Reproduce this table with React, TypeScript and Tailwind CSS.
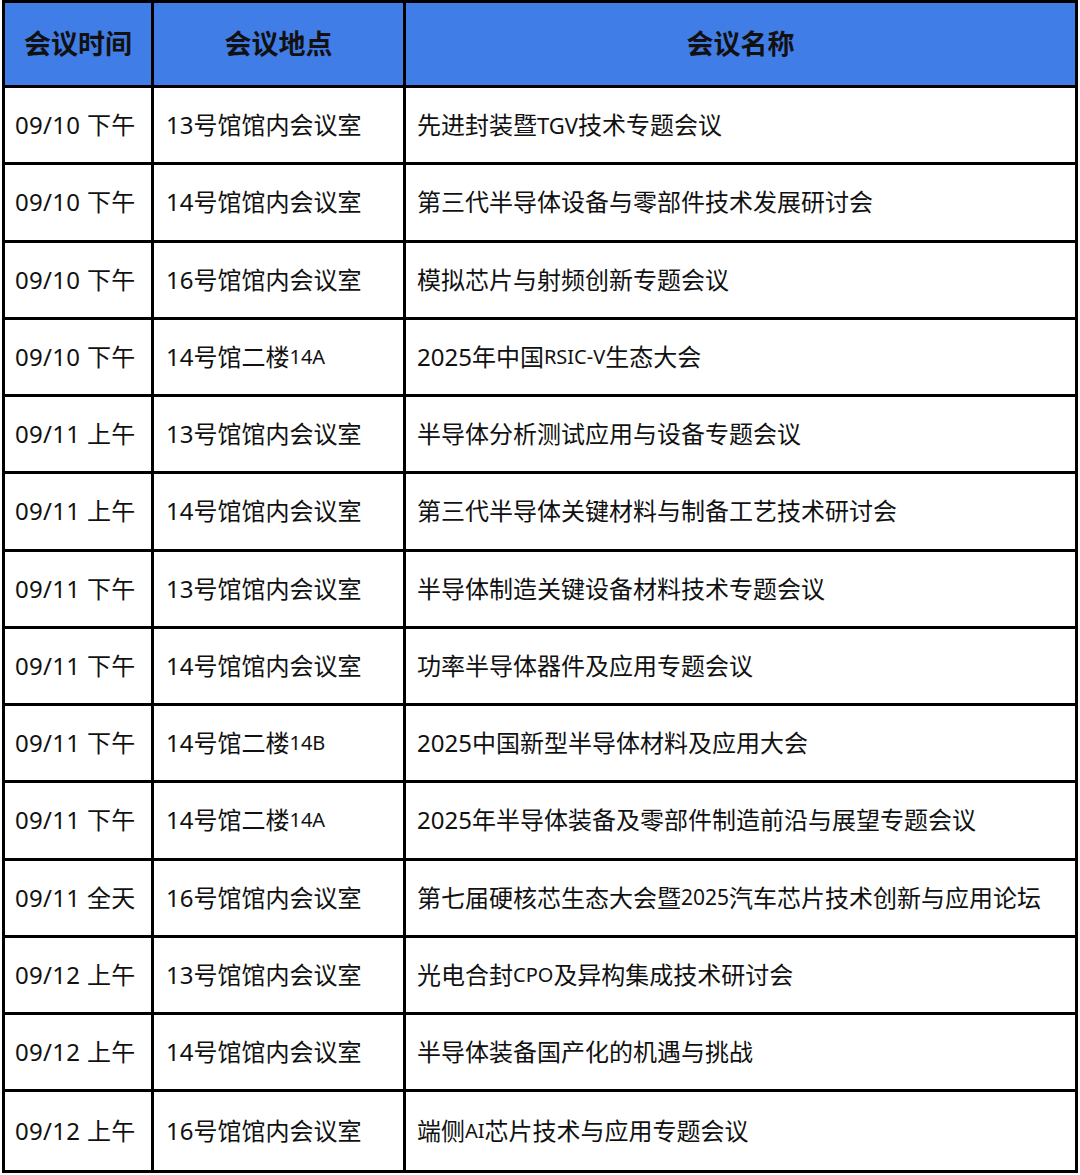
import React from "react"

type Row = { time: string; place: React.ReactNode; name: React.ReactNode }

const S = ({ children }: { children: React.ReactNode }) => (
  <span className="text-[20px]">{children}</span>
)

const rows: Row[] = [
  { time: "09/10 下午", place: "13号馆馆内会议室", name: <>先进封装暨<span className="text-[22px]">TGV</span>技术专题会议</> },
  { time: "09/10 下午", place: "14号馆馆内会议室", name: "第三代半导体设备与零部件技术发展研讨会" },
  { time: "09/10 下午", place: "16号馆馆内会议室", name: "模拟芯片与射频创新专题会议" },
  { time: "09/10 下午", place: <>14号馆二楼<S>14A</S></>, name: <>2025年中国<S>RSIC-V</S>生态大会</> },
  { time: "09/11 上午", place: "13号馆馆内会议室", name: "半导体分析测试应用与设备专题会议" },
  { time: "09/11 上午", place: "14号馆馆内会议室", name: "第三代半导体关键材料与制备工艺技术研讨会" },
  { time: "09/11 下午", place: "13号馆馆内会议室", name: "半导体制造关键设备材料技术专题会议" },
  { time: "09/11 下午", place: "14号馆馆内会议室", name: "功率半导体器件及应用专题会议" },
  { time: "09/11 下午", place: <>14号馆二楼<S>14B</S></>, name: "2025中国新型半导体材料及应用大会" },
  { time: "09/11 下午", place: <>14号馆二楼<S>14A</S></>, name: "2025年半导体装备及零部件制造前沿与展望专题会议" },
  { time: "09/11 全天", place: "16号馆馆内会议室", name: <>第七届硬核芯生态大会暨<span className="text-[21px]">2025</span>汽车芯片技术创新与应用论坛</> },
  { time: "09/12 上午", place: "13号馆馆内会议室", name: <>光电合封<S>CPO</S>及异构集成技术研讨会</> },
  { time: "09/12 上午", place: "14号馆馆内会议室", name: "半导体装备国产化的机遇与挑战" },
  { time: "09/12 上午", place: "16号馆馆内会议室", name: <>端侧<S>AI</S>芯片技术与应用专题会议</> },
]

export default function App() {
  return (
    <div
      className="w-[1080px] h-[1175px] bg-white text-[#111]"
      style={{ fontFamily: '"Noto Sans", "Noto Sans CJK SC", sans-serif' }}
    >
      <div className="ml-[2px] w-[1076px] border-[3px] border-black">
        <div className="flex h-[85px] bg-[#417de6] border-b-[3px] border-black text-[27px] font-bold">
          <div className="w-[149px] shrink-0 border-r-[3px] border-black flex items-center justify-center">会议时间</div>
          <div className="w-[252px] shrink-0 border-r-[3px] border-black flex items-center justify-center">会议地点</div>
          <div className="flex-1 flex items-center justify-center">会议名称</div>
        </div>
        {rows.map((r, i) => (
          <div
            key={i}
            className={`flex h-[77.25px] text-[24px] ${i < rows.length - 1 ? "border-b-[3px] border-black" : ""}`}
          >
            <div className="w-[149px] shrink-0 border-r-[3px] border-black flex items-center pl-[10px] whitespace-nowrap tracking-[0.3px]">{r.time}</div>
            <div className="w-[252px] shrink-0 border-r-[3px] border-black flex items-center pl-[12px] whitespace-nowrap">{r.place}</div>
            <div className="flex-1 flex items-center pl-[11px] whitespace-nowrap">{r.name}</div>
          </div>
        ))}
      </div>
    </div>
  )
}
